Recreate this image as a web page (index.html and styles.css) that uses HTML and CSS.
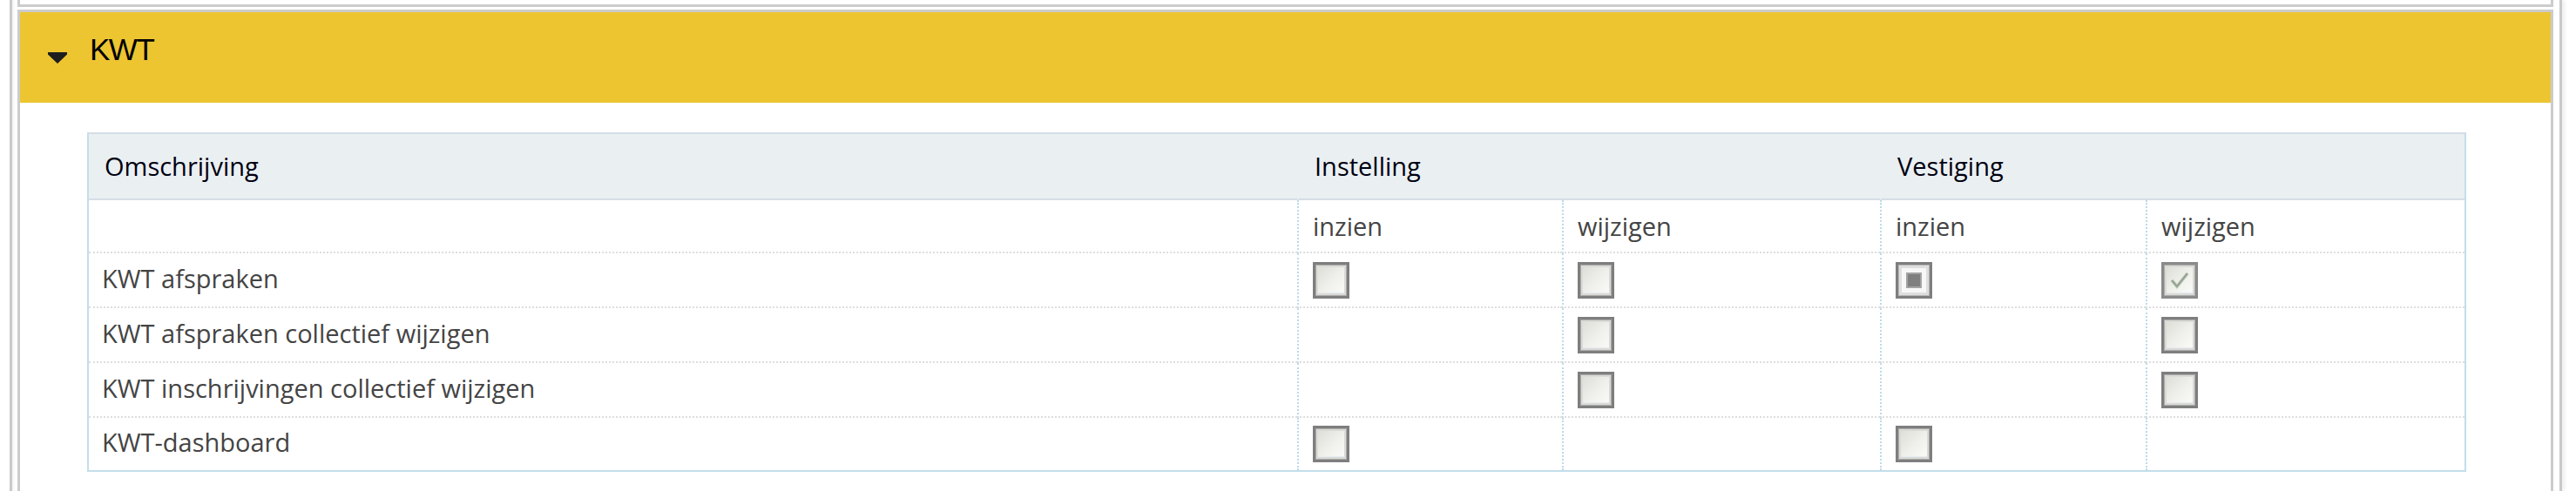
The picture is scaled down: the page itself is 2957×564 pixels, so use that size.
FILE: index.html
```html
<!DOCTYPE html>
<html lang="nl">
<head>
<meta charset="utf-8">
<title>KWT rechten</title>
<link rel="stylesheet" href="styles.css">
</head>
<body>
<div class="frame">
  <div class="prev-panel"></div>
  <section class="panel">
    <header class="sec-head">
      <svg class="caret" width="22" height="13" viewBox="0 0 22 13" aria-hidden="true"><polygon points="0,0 22,0 22,2.5 11,13 0,2.5" fill="#1e1e1e"/></svg>
      <h2 class="title">KWT</h2>
    </header>
    <div class="sec-body">
      <table class="rights">
        <colgroup>
          <col class="c-desc"><col class="c-a"><col class="c-b"><col class="c-c"><col class="c-d">
        </colgroup>
        <thead>
          <tr><th class="h-desc">Omschrijving</th><th class="h-grp" colspan="2">Instelling</th><th class="h-grp" colspan="2">Vestiging</th></tr>
        </thead>
        <tbody>
          <tr class="sub">
            <td class="desc"></td><td class="perm">inzien</td><td class="perm">wijzigen</td><td class="perm">inzien</td><td class="perm">wijzigen</td>
          </tr>
          <tr>
            <td class="desc">KWT afspraken</td>
            <td class="perm"><span class="cb"></span></td>
            <td class="perm"><span class="cb"></span></td>
            <td class="perm"><span class="cb cb-mixed"></span></td>
            <td class="perm"><span class="cb cb-checked"><svg width="36" height="36" viewBox="0 0 36 36" aria-hidden="true"><path d="M9 18 L15 25 L27 10" fill="none" stroke="#c2dcbc" stroke-width="4"/><path d="M9 18 L15 25 L27 10" fill="none" stroke="#9a9f9a" stroke-width="2.2"/></svg></span></td>
          </tr>
          <tr>
            <td class="desc">KWT afspraken collectief wijzigen</td>
            <td class="perm"></td>
            <td class="perm"><span class="cb"></span></td>
            <td class="perm"></td>
            <td class="perm"><span class="cb"></span></td>
          </tr>
          <tr>
            <td class="desc">KWT inschrijvingen collectief wijzigen</td>
            <td class="perm"></td>
            <td class="perm"><span class="cb"></span></td>
            <td class="perm"></td>
            <td class="perm"><span class="cb"></span></td>
          </tr>
          <tr class="last">
            <td class="desc">KWT-dashboard</td>
            <td class="perm"><span class="cb"></span></td>
            <td class="perm"></td>
            <td class="perm"><span class="cb"></span></td>
            <td class="perm"></td>
          </tr>
        </tbody>
      </table>
    </div>
  </section>
</div>
</body>
</html>
```

FILE: styles.css
```css
html, body {
  margin: 0;
  padding: 0;
  height: 564px;
  overflow: hidden;
  background: #ffffff;
}

body {
  font-family: "Open Sans", "Noto Sans", sans-serif;
}

.frame {
  box-sizing: border-box;
  margin-left: 11px;
  width: 2930px;
  height: 564px;
  border-left: 3px solid #c9c9c9;
  border-right: 3px solid #c9c9c9;
  padding: 0 7px 0 6px;
  box-shadow: 3px 0 4px rgba(0, 0, 0, 0.07), inset 3px 0 3px -1px rgba(0, 0, 0, 0.05);
}

.prev-panel {
  height: 5px;
  border: 3px solid #cccccc;
  border-top: 0;
}

.panel {
  margin-top: 3px;
  border: 3px solid #cccccc;
  border-bottom: 0;
  height: 550px;
}

.sec-head {
  box-sizing: border-box;
  display: flex;
  align-items: flex-start;
  height: 104px;
  padding: 26px 0 0 32px;
  background: #edc531;
}

.caret {
  display: block;
  margin-top: 20px;
  flex: none;
}

.title {
  margin: 0 0 0 26px;
  font-family: "Liberation Sans", Arial, sans-serif;
  font-weight: normal;
  font-size: 35px;
  line-height: 34px;
  letter-spacing: -1.5px;
  color: #000000;
}

.sec-body {
  padding: 34px 0 0 77px;
}

.rights {
  table-layout: fixed;
  width: 2731px;
  border-collapse: separate;
  border-spacing: 0;
  border: 2px solid #c3dee9;
  border-top-color: #d5dde5;
  font-size: 29px;
  line-height: 40px;
}

.c-desc { width: 1387px; }
.c-a { width: 304px; }
.c-b { width: 365px; }
.c-c { width: 305px; }
.c-d { width: 366px; }

.rights th {
  box-sizing: border-box;
  height: 76px;
  padding: 0 0 0 18px;
  background: #eaeff2;
  border-bottom: 2px solid #d5dde5;
  text-align: left;
  vertical-align: middle;
  font-weight: 500;
  color: #000010;
}

.rights th.h-grp {
  border-left: 2px solid transparent;
}

.rights td {
  box-sizing: border-box;
  height: 63px;
  padding: 0 0 0 16px;
  border-bottom: 2px dotted #dedede;
  vertical-align: middle;
  color: #444444;
  white-space: nowrap;
}

.rights td.desc {
  padding-left: 15px;
  padding-bottom: 4px;
}

.rights td.perm {
  border-left: 2px dotted #bcdbe8;
}

.rights tr.sub td {
  height: 61px;
  padding-bottom: 0;
}

.rights tr.last td {
  height: 60px;
  border-bottom: 0;
}

.cb {
  box-sizing: border-box;
  display: block;
  position: relative;
  width: 42px;
  height: 42px;
  border: 3px solid #7e7e7e;
  background: linear-gradient(135deg, #dcdcd6 0%, #f0f0ec 55%, #fcfcfb 100%);
  box-shadow: inset 0 0 0 1px #ababab, inset 0 0 0 3px #dadad6, inset 0 -3px 0 1px #e6ecf2;
}

.cb-mixed {
  background: #f7f7f7;
  box-shadow: inset 0 0 0 1px #b5b5b5, inset 0 0 0 4px #dedede;
}

.cb-mixed::after {
  content: "";
  position: absolute;
  left: 9px;
  top: 9px;
  width: 18px;
  height: 18px;
  box-sizing: border-box;
  background: #7f7f7f;
  border: 2px solid #a3a3a3;
}

.cb-checked {
  border-color: #8a8a8a;
}

.cb-checked svg {
  position: absolute;
  left: 0;
  top: 0;
}
```
